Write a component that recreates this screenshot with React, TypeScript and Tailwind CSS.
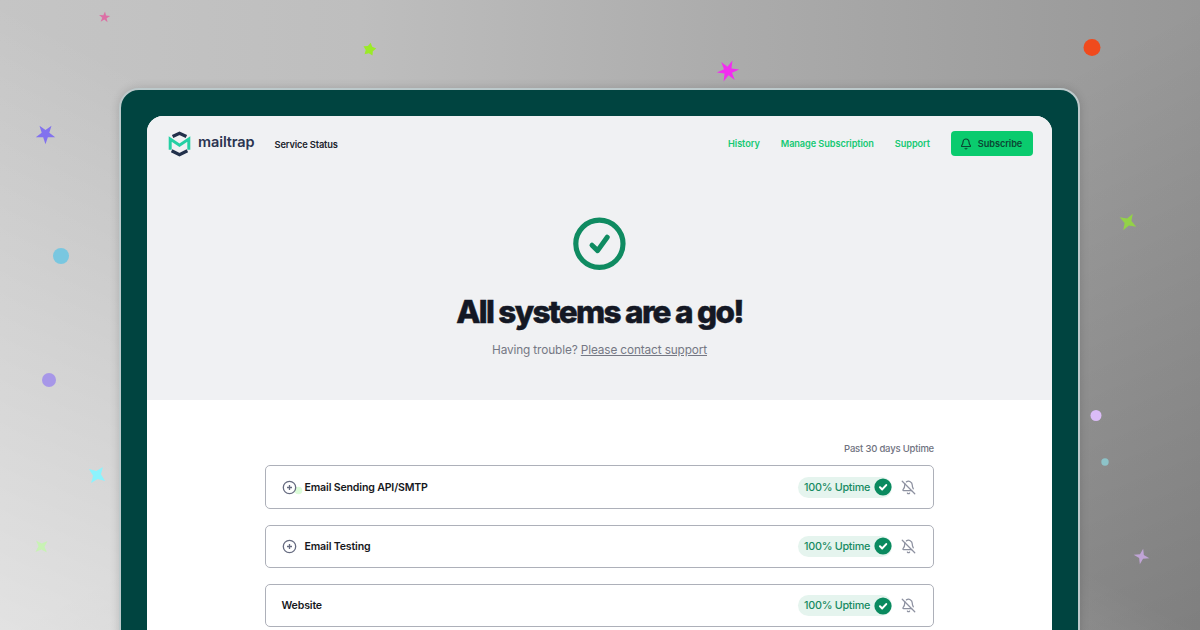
import { Bell, BellOff } from "lucide-react";

const navLinks = ["History", "Manage Subscription", "Support"];

const services = [
    { name: "Email Sending API/SMTP", expandable: true },
    { name: "Email Testing", expandable: true },
    { name: "Website", expandable: false },
];

const dots = [
    { x: 1092, y: 47.5, r: 8.5, fill: "#f04a1d" },
    { x: 61, y: 256, r: 8, fill: "#79c7e0" },
    { x: 49, y: 380, r: 7, fill: "#a797e8" },
    { x: 1096, y: 415.5, r: 5.5, fill: "#dbbcf7" },
    { x: 1105, y: 462, r: 3.7, fill: "#8dc3c8" },
    { x: 298.5, y: 490.5, r: 3.8, fill: "#dcfcd9" },
];

const stars = [
    { x: 104.5, y: 17.3, outer: 5.9, inner: 2.3, points: 5, rotate: 5, fill: "#dc6fa5" },
    { x: 369.5, y: 49.5, outer: 6.8, inner: 3.8, points: 5, rotate: 10, fill: "#9bea28" },
    { x: 728, y: 71, outer: 11.3, inner: 4.3, points: 6, rotate: 23, fill: "#f22df0" },
    { x: 45.5, y: 134, outer: 10.2, inner: 4, points: 5, rotate: 180, fill: "#8272ee" },
    { x: 1128, y: 222, outer: 9.6, inner: 3.5, points: 4, rotate: 30, fill: "#93d247" },
    { x: 97, y: 475, outer: 10, inner: 4, points: 4, rotate: 36, fill: "#8cf3fd" },
    { x: 41.5, y: 546.5, outer: 8.2, inner: 3, points: 4, rotate: 48, fill: "#c8f2b4" },
    { x: 1141.5, y: 556.5, outer: 8, inner: 2.8, points: 4, rotate: 12, fill: "#c0a4d6" },
];

function starPoints(star: (typeof stars)[number]) {
    return Array.from({ length: star.points * 2 }, (_, i) => {
        const radius = i % 2 === 0 ? star.outer : star.inner;
        const angle = (i * Math.PI) / star.points + (star.rotate * Math.PI) / 180;
        return `${star.x + radius * Math.sin(angle)},${star.y - radius * Math.cos(angle)}`;
    }).join(" ");
}

function Confetti() {
    return (
        <svg className="absolute inset-0 pointer-events-none" width="1200" height="630" aria-hidden="true">
            {dots.map((dot) => (
                <circle key={dot.fill} cx={dot.x} cy={dot.y} r={dot.r} fill={dot.fill} />
            ))}
            {stars.map((star) => (
                <polygon key={star.fill} points={starPoints(star)} fill={star.fill} />
            ))}
        </svg>
    );
}

function Logo() {
    return (
        <div className="flex items-center">
            <svg width="23" height="26" viewBox="0 0 23 26" fill="none">
                <path d="M4.6 5.5 11.5 2.2 18.4 5.5" stroke="#22304a" strokeWidth="3.2" />
                <path d="M3.6 19.8 11.5 23.8 19.4 19.8" stroke="#22304a" strokeWidth="3.2" />
                <path d="M2.2 18.8V8L11.5 14.2 20.8 8V18.8" stroke="#25d0a4" strokeWidth="3" />
            </svg>
            <span className="ml-[7px] -mt-[3px] w-[56px] text-[14.5px] leading-none font-semibold tracking-[-0.1px] text-[#2b3450]">
                mailtrap
            </span>
        </div>
    );
}

function Check({ size }: { size: number }) {
    return (
        <svg width={size} height={size} viewBox="0 0 18 18" fill="none">
            <circle cx="9" cy="9" r="8.6" fill="#0a8a5f" />
            <path d="m6 9.3 2.2 2.1 4-4.3" stroke="#fff" strokeWidth="2.1" strokeLinecap="round" strokeLinejoin="round" />
        </svg>
    );
}

function ServiceRow({ name, expandable }: { name: string; expandable: boolean }) {
    return (
        <div className="flex h-[43.5px] items-center justify-between rounded-[5px] border border-[#adb0b9] pl-[15.5px] pr-[17px]">
            <div className="flex items-center gap-2">
                {expandable && (
                    <svg className="relative z-10" width="15" height="15" viewBox="0 0 15 15" fill="none" stroke="#666b80" strokeWidth="1.3">
                        <circle cx="7.5" cy="7.5" r="6.2" />
                        <path d="M7.5 5v5M5 7.5h5" />
                    </svg>
                )}
                <span className="mt-px text-[10.6px] font-semibold tracking-[-0.17px] text-[#17181c]">{name}</span>
            </div>
            <div className="flex items-center gap-[9px]">
                <div className="flex h-[21px] items-center gap-1 rounded-full bg-[#e5f4ee] pl-[6.5px]">
                    <span className="mt-px text-[10.8px] font-medium tracking-[-0.28px] text-[#168a62]">100% Uptime</span>
                    <Check size={18} />
                </div>
                <BellOff size={15} strokeWidth={2} color="#8d91a0" />
            </div>
        </div>
    );
}

export default function App() {
    return (
        <div className="relative h-[630px] w-[1200px] overflow-hidden bg-[linear-gradient(to_top_right,rgba(255,255,255,0.5),transparent_50%),linear-gradient(to_top_left,rgba(0,0,0,0.16),transparent_50%),linear-gradient(to_right,#c5c5c5,#bebebe_30%,#acacac_60%,#979797)] font-['Inter',sans-serif]">
            {/* Device frame */}
            <div className="ml-[119px] mt-[88px] w-[961px] h-[600px] rounded-t-[20px] border-2 border-[#bcc9cb] bg-[#004440] px-[26px] pt-[26px] shadow-[0_0_10px_rgba(0,0,0,0.16)]">
                <div className="h-full overflow-hidden rounded-t-[16px] bg-white">
                    {/* Hero */}
                    <div className="h-[284px] bg-[#f0f1f3]">
                        <header className="flex h-[55px] items-center justify-between pl-[21px] pr-[19px]">
                            <div className="flex items-center gap-[20.5px]">
                                <Logo />
                                <span className="mt-[3px] text-[9.3px] font-semibold tracking-[-0.15px] text-[#20232c]">
                                    Service Status
                                </span>
                            </div>
                            <nav className="flex items-center gap-[21px]">
                                {navLinks.map((link) => (
                                    <a key={link} className="mt-px text-[9.2px] font-semibold tracking-[-0.08px] text-[#16c974]">
                                        {link}
                                    </a>
                                ))}
                                <button className="flex h-[25px] w-[82px] items-center justify-center gap-[6px] rounded-[4px] bg-[#0acb6e] pr-[2px] text-[9.2px] font-semibold tracking-[-0.08px] text-[#0b4734]">
                                    <Bell size={12} strokeWidth={2.4} />
                                    Subscribe
                                </button>
                            </nav>
                        </header>
                        <div className="flex flex-col items-center pt-[46px]">
                            <svg width="55" height="54" viewBox="0 0 55 54" fill="none" stroke="#0f8b61">
                                <circle cx="27.4" cy="26.8" r="23.6" strokeWidth="5.2" />
                                <path d="m20 28.2 5.6 5.4 9.6-13.4" strokeWidth="5" strokeLinecap="round" strokeLinejoin="round" />
                            </svg>
                            <h1 className="mt-[21px] text-[31.5px] leading-10 font-extrabold tracking-[-1.7px] text-[#141824] [-webkit-text-stroke:0.5px_#141824]">
                                All systems are a go!
                            </h1>
                            <p className="mt-[10px] text-[11.8px] tracking-[-0.12px] text-[#757884]">
                                Having trouble? <a className="underline">Please contact support</a>
                            </p>
                        </div>
                    </div>

                    {/* Services */}
                    <div className="ml-[118px] w-[669px] pt-[41px]">
                        <p className="mb-[9.4px] text-right text-[9.5px] leading-[15px] font-medium tracking-[-0.2px] text-[#6f7280]">
                            Past 30 days Uptime
                        </p>
                        <div className="flex flex-col gap-[15.7px]">
                            {services.map((service) => (
                                <ServiceRow key={service.name} {...service} />
                            ))}
                        </div>
                    </div>
                </div>
            </div>
            <Confetti />
        </div>
    );
}
